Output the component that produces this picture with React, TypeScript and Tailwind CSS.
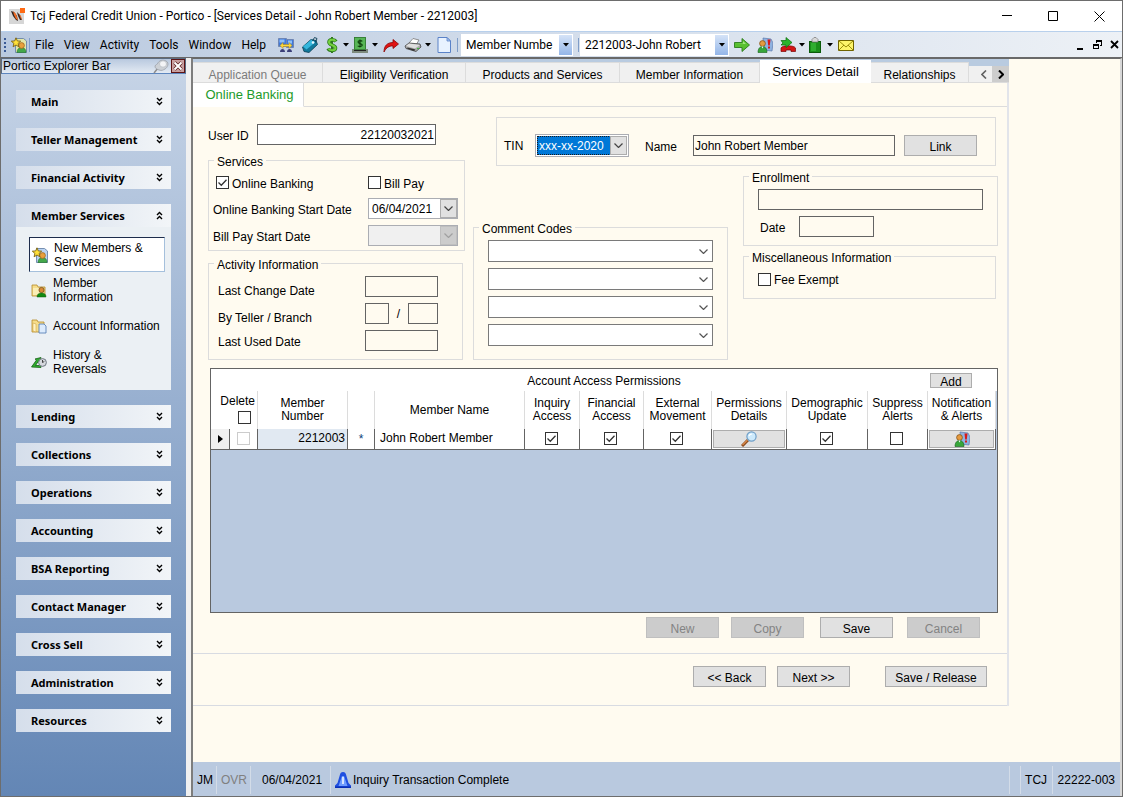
import { useState } from "react";
import type { ReactNode } from "react";

const sections = [
  "Main",
  "Teller Management",
  "Financial Activity",
  "Member Services",
  "Lending",
  "Collections",
  "Operations",
  "Accounting",
  "BSA Reporting",
  "Contact Manager",
  "Cross Sell",
  "Administration",
  "Resources",
];

const tabs = [
  { label: "Application Queue", width: "w-[130px]" },
  { label: "Eligibility Verification", width: "w-[143px]" },
  { label: "Products and Services", width: "w-[154px]" },
  { label: "Member Information", width: "w-[140px]" },
  { label: "Services Detail", width: "w-[111px]" },
  { label: "Relationships", width: "w-[98px]" },
];

/* ---------- icons ---------- */

function Icon({ children, size = "size-4" }: { children: ReactNode; size?: string }) {
  return (
    <svg viewBox="0 0 16 16" className={`${size} shrink-0`} aria-hidden="true">
      {children}
    </svg>
  );
}

function AppLogo() {
  return (
    <Icon>
      <rect x="0" y="1" width="15" height="15" fill="#d6d6d6" />
      <path d="M2 3l3 1 3 4 1 5-2-1-3-4z" fill="#2e2422" />
      <path d="M4 3l3 3 2 6-2-1-2-4z" fill="#f26a21" />
      <path d="M8 4l3 3 2 5-2 0-2-4z" fill="#3a2a26" />
      <path d="M10 6l2 2 1 4-1-1z" fill="#f26a21" />
      <rect x="11" y="0" width="5" height="5" fill="#ff6a13" />
    </Icon>
  );
}

function StarMember({ page = "#b9d3f2" }: { page?: string }) {
  return (
    <Icon>
      <path d="M4.500 1.500h8L15.500 4v11.500h-11z" fill={page} stroke="#6a84a8" strokeWidth=".9" />
      <path d="M6 15.500C6 12 8 10.500 10.500 10.500s4.500 1.500 4.500 5z" fill="#43a84a" stroke="#1d6b22" strokeWidth=".5" />
      <circle cx="10.500" cy="8.500" r="2.900" fill="#e8a03c" stroke="#9a6218" strokeWidth=".7" />
      <path d="M5 .8l1.300 3.100 3.400.3-2.600 2.200.8 3.400L5 8 2.100 9.800l.8-3.400L.3 4.200l3.400-.3z" fill="#ffe03a" stroke="#7d6210" strokeWidth=".9" />
    </Icon>
  );
}

function FolderMember() {
  return (
    <Icon>
      <path d="M1 3h5l1 2h7v9H1z" fill="#f6dd8a" stroke="#b58a2a" strokeWidth=".8" />
      <path d="M2 6h8v7H2z" fill="#fbeeb5" />
      <circle cx="10.500" cy="8" r="2.600" fill="#d98a35" stroke="#5d3a10" strokeWidth=".6" />
      <path d="M6 15c0-3 2-4 4.500-4s4.500 1 4.500 4z" fill="#118a11" stroke="#0b5a0b" strokeWidth=".5" />
    </Icon>
  );
}

function FolderDoc() {
  return (
    <Icon>
      <path d="M1 2h5l1 2h6v10H1z" fill="#f6dd8a" stroke="#b58a2a" strokeWidth=".8" />
      <path d="M2 5l3 1v8l-3-1z" fill="#fff3c4" stroke="#c79a3a" strokeWidth=".5" />
      <path d="M8 6h5l2 2v7H8z" fill="#dcebfc" stroke="#5a82b8" strokeWidth=".9" />
    </Icon>
  );
}

function HistoryIcon() {
  return (
    <Icon>
      <path d="M.5 13l5-7L4 5l6-1.500L9 8 7.500 7 4.500 11.500H10v2z" fill="#2fae2f" stroke="#145f14" strokeWidth=".8" />
      <circle cx="11.500" cy="8.500" r="3.900" fill="#d5d9de" stroke="#6d7680" strokeWidth="1" />
      <path d="M11.500 6v2.500l1.800-1" stroke="#333" strokeWidth=".9" fill="none" />
    </Icon>
  );
}

function MonitorsIcon() {
  return (
    <Icon>
      <path d="M.5 1.500h8v8h-8zM8.500 2.500h7v8h-7z" fill="#3f78dc" stroke="#6f86b4" strokeWidth="1" />
      <path d="M1.500 2.500h5v3h-5zM10 3.500h4v3h-4z" fill="#8fc0f5" />
      <path d="M2 15c0-4 5-4 5 0zM9 15c0-4 5-4 5 0z" fill="#3b3f78" />
      <path d="M2 8.500l3-3v2h6v-2l3 3-3 3v-2H5v2z" fill="#ffd83a" stroke="#a88412" strokeWidth=".5" />
    </Icon>
  );
}

function TagIcon() {
  return (
    <Icon>
      <path d="M.5 10L9 2.500l5 1 1.500 4L7 15.500l-5-1z" fill="#12799c" stroke="#0a3c52" strokeWidth=".8" />
      <path d="M1 9.500L9.500 2.500l3.500 3-8.500 7z" fill="#35b6dc" />
      <circle cx="11" cy="5.500" r="1.300" fill="#e9f8ff" />
      <path d="M10.500 4l2-3.500 2.500 1-1.500 4" stroke="#0a3c52" strokeWidth=".9" fill="none" />
    </Icon>
  );
}

function DollarIcon() {
  return (
    <Icon>
      <path d="M12 4.500C10.500 2 5 2 5 5.200S11.500 8 11.500 11s-6 3.300-7.500.5" fill="none" stroke="#2f7a1c" strokeWidth="3.600" />
      <path d="M8 0v16" stroke="#2f7a1c" strokeWidth="2" />
      <path d="M11.500 4.500C10.500 2 5 2 5 5.200S11.500 8 11.500 11s-6 3-7 .5" fill="none" stroke="#74d23f" strokeWidth="2" />
    </Icon>
  );
}

function CashIcon() {
  return (
    <Icon>
      <rect x="2.500" y=".5" width="11" height="12" fill="#57b657" stroke="#2f7a2f" strokeWidth=".9" />
      <path d="M10.300 4.300C9.300 3.200 6 3.400 6 5.100s4.300 1.300 4.300 3-3.300 1.900-4.600.8M8 2.500v8" fill="none" stroke="#0b3c0b" strokeWidth="1.100" />
      <path d="M0 12h2v1h12v-1h2v4H0z" fill="#7d8a7d" />
      <path d="M2 13h12v1H2z" fill="#222" />
    </Icon>
  );
}

function RedArrow() {
  return (
    <Icon>
      <path d="M1 15c0-6 3-9.500 9-9.500V2.500L15.500 7 10 11.500V9C6 8.500 3 11 1 15z" fill="#e01414" stroke="#8a0505" strokeWidth=".8" />
    </Icon>
  );
}

function PrinterIcon() {
  return (
    <svg viewBox="0 0 18 16" className="h-4 w-[18px] shrink-0" aria-hidden="true">
      <path d="M5 6l4-4.500 6 1.500-3 5z" fill="#fff" stroke="#777" strokeWidth=".8" />
      <path d="M1 9l4-3 11 1 1 3-5 4.500-10-3z" fill="#a9a9a9" stroke="#444" strokeWidth=".8" />
      <path d="M2 9l9 2.500L16 8 5 6.500z" fill="#dedede" />
      <path d="M3 11.500l7 2.500 1.500-1.500-8-2z" fill="#333" />
      <path d="M13 11h2v1h-2z" fill="#3fbf3f" />
    </svg>
  );
}

function PageIcon() {
  return (
    <Icon>
      <path d="M2 .5h9l3.500 3.500v11.500H2z" fill="#e8f2ff" stroke="#5a82c8" strokeWidth="1" />
      <path d="M11 .5V4h3.500z" fill="#a9c8f0" stroke="#5a82c8" strokeWidth=".8" />
    </Icon>
  );
}

function GreenArrow() {
  return (
    <Icon>
      <path d="M.5 5.500H8V1.500l7.500 6.500L8 14.500v-4H.5z" fill="#58c030" stroke="#2b7a1c" strokeWidth=".9" />
      <path d="M1.500 6.500H9V4l3 3z" fill="#a5e685" />
    </Icon>
  );
}

function MemberAlert() {
  return (
    <Icon>
      <path d="M6 1l8 1 2 4-1 8-8-1z" fill="#8fb2e0" stroke="#5a7aae" strokeWidth=".7" />
      <path d="M10.500 2.500h3l-.7 6h-1.600zM11 9.500h2v2h-2z" fill="#d81818" />
      <circle cx="5.500" cy="6.500" r="2.900" fill="#e59a3f" stroke="#7a4a12" strokeWidth=".7" />
      <path d="M1 15.500C1 11.500 3 9.500 5.500 9.500s4.500 2 4.500 6z" fill="#37a63a" stroke="#14611a" strokeWidth=".6" />
      <path d="M4.500 9.500l1 2 1-2z" fill="#fff" />
    </Icon>
  );
}

function PhoneArrow() {
  return (
    <Icon>
      <path d="M1 11c1-3 13-3 14.500 0v3.500H11V13H6v1.500H1z" fill="#d31616" stroke="#7a0707" strokeWidth=".7" />
      <path d="M1 3.500h5V.5L12 5.500l-6 5V8H1l2-2z" fill="#2cb52c" stroke="#0c6a0c" strokeWidth=".7" />
    </Icon>
  );
}

function ClipIcon() {
  return (
    <Icon>
      <rect x="2.500" y="4.500" width="11" height="11" fill="#1b8f1b" stroke="#0a5a0a" />
      <path d="M4 6h5v8H4z" fill="#2fae2f" />
      <path d="M5 5V2.500L7 .5h2l2 2V5z" fill="#d8d8d8" stroke="#777" strokeWidth=".7" />
    </Icon>
  );
}

function MailIcon() {
  return (
    <Icon>
      <path d="M.5 3.500h15v10H.5z" fill="#fdf56a" stroke="#6f6300" />
      <path d="M1 4l7 6 7-6M1 13l5-5M15 13l-5-5" fill="none" stroke="#8f8200" strokeWidth=".9" />
    </Icon>
  );
}

function PinIcon() {
  return (
    <Icon>
      <path d="M1 15l4-5" stroke="#8d8d8d" strokeWidth="1.500" />
      <path d="M2 8c1-2 2-1 3-3s4-4 8-2 1 7-1 8-3 2-6 1-4-2-4-4z" fill="#cdd1d6" stroke="#9aa0a8" strokeWidth=".8" />
      <ellipse cx="10" cy="6" rx="3.500" ry="3.200" fill="#f3f4f6" stroke="#b5bac0" strokeWidth=".7" />
    </Icon>
  );
}

function MagnifierIcon() {
  return (
    <Icon>
      <path d="M1 15l6-6" stroke="#8a4a1c" strokeWidth="3" />
      <path d="M1.500 14l5-5" stroke="#d88a4a" strokeWidth="1.200" />
      <circle cx="10.500" cy="5.500" r="4.600" fill="#cdeafc" stroke="#6f9fc8" strokeWidth="1.200" />
      <path d="M8 5c.5-1.500 1.500-2 3-2" stroke="#fff" strokeWidth="1.200" fill="none" />
    </Icon>
  );
}

function StatusBell() {
  return (
    <Icon>
      <path d="M8 0c2 0 2.500 1 3 2.500L13.500 11l2.500 2.500V16H0v-2.500L2.500 11 5 2.500C5.500 1 6 0 8 0z" fill="#1f4fe0" />
      <path d="M7 4h2l3.500 10h-9z" fill="#6f9cff" />
      <path d="M7.200 5h1.600v7H7.200z" fill="#f2f6ff" />
      <path d="M0 14.500h16V16H0z" fill="#0a2fb8" />
    </Icon>
  );
}

function Caret({ className = "" }: { className?: string }) {
  return (
    <svg viewBox="0 0 7 4" className={`h-1 w-[7px] shrink-0 ${className}`} aria-hidden="true">
      <path d="M1 0h6L4 3.500z" fill="#000" />
    </svg>
  );
}

function Chevron({ className }: { className: string }) {
  return (
    <svg viewBox="0 0 9 5" className="h-[5px] w-[9px]" aria-hidden="true">
      <path d="M.5.5l4 4 4-4" fill="none" strokeWidth="1.200" className={className} />
    </svg>
  );
}

function DoubleChevron({ up }: { up?: boolean }) {
  return (
    <svg viewBox="0 0 7 9" className="h-[9px] w-[7px]" aria-hidden="true">
      <path
        d={up ? "M1 4l2.500-2.500L6 4M1 8l2.500-2.500L6 8" : "M1 1l2.500 2.500L6 1M1 5l2.500 2.500L6 5"}
        fill="none"
        stroke="#000"
        strokeWidth="1.400"
      />
    </svg>
  );
}

/* ---------- form controls ---------- */

function Group({ title, className = "", children }: { title: string; className?: string; children: ReactNode }) {
  return (
    <fieldset className={`border border-[#dcdcdc] ${className}`}>
      <legend className="ml-[5px] px-[3px] pt-1 leading-[14px]">{title}</legend>
      {children}
    </fieldset>
  );
}

function Check({ label, name, defaultChecked, disabled }: { label?: string; name: string; defaultChecked?: boolean; disabled?: boolean }) {
  return (
    <label className="inline-flex items-center gap-[3px]">
      <span className="relative flex size-[13px]">
        <input
          type="checkbox"
          name={name}
          aria-label={label ? undefined : name}
          defaultChecked={defaultChecked}
          disabled={disabled}
          className="peer size-[13px] appearance-none border border-[#333333] bg-white disabled:border-[#cccccc]"
        />
        <svg viewBox="0 0 13 13" className="pointer-events-none absolute inset-0 hidden size-[13px] peer-checked:block" aria-hidden="true">
          <path d="M2.500 6.500l2.800 2.800 5.200-5.500" fill="none" stroke="#333" strokeWidth="1.300" />
        </svg>
      </span>
      {label && <span className="pt-[2px] leading-[14px]">{label}</span>}
    </label>
  );
}

function TextBox({ id, label, value = "", className }: { id: string; label?: string; value?: string; className: string }) {
  return (
    <input
      id={id}
      type="text"
      aria-label={label}
      defaultValue={value}
      className={`h-[21px] border border-[#646464] px-px outline-none ${className}`}
    />
  );
}

function Button({ children, disabled, className = "w-[73px]" }: { children: ReactNode; disabled?: boolean; className?: string }) {
  return (
    <button
      type="button"
      disabled={disabled}
      className={`h-[21px] border border-[#adadad] bg-[#e1e1e1] pt-[3px] leading-[14px] disabled:border-[#bfbfbf] disabled:bg-[#cccccc] disabled:text-[#838383] ${className}`}
    >
      {children}
    </button>
  );
}

function DateCombo({ id, value, disabled }: { id: string; value?: string; disabled?: boolean }) {
  return (
    <div className={`relative flex h-[21px] w-[90px] border border-[#abadb3] ${disabled ? "bg-[#f0f0f0]" : "bg-white"}`}>
      <select id={id} disabled={disabled} className="w-full appearance-none pt-px pl-[3px] outline-none">
        <option>{value ?? ""}</option>
      </select>
      <span
        className={`pointer-events-none absolute inset-y-0 right-0 flex w-[17px] items-center justify-center border ${
          disabled ? "border-[#bfbfbf] bg-[#cccccc]" : "border-[#adadad] bg-[#e1e1e1]"
        }`}
      >
        <Chevron className={disabled ? "stroke-[#a0a0a0]" : "stroke-[#444444]"} />
      </span>
    </div>
  );
}

function ToolbarCombo({ label, value, width }: { label: string; value: string; width: string }) {
  return (
    <div className={`relative flex h-[22px] bg-white ${width}`}>
      <select aria-label={label} className="w-full appearance-none pr-4 pl-[5px] outline-none">
        <option>{value}</option>
      </select>
      <span className="pointer-events-none absolute inset-y-px right-px flex w-[13px] items-center justify-center bg-linear-to-b from-[#d5e3f7] to-[#94b6e8]">
        <Caret />
      </span>
    </div>
  );
}

/* ---------- window parts ---------- */

function TitleBar() {
  return (
    <header className="flex h-[30px] items-center bg-white pl-2 font-['Roboto',sans-serif] text-xs">
      <AppLogo />
      <h1 className="ml-[5px] flex-1 whitespace-nowrap">
        Tcj Federal Credit Union - Portico - [Services Detail - John Robert Member - 2212003]
      </h1>
      <button type="button" aria-label="Minimize" className="flex w-[46px] justify-center">
        <svg viewBox="0 0 11 11" className="size-[11px]"><path d="M0 4.500h10" stroke="#000" /></svg>
      </button>
      <button type="button" aria-label="Maximize" className="flex w-[46px] justify-center">
        <svg viewBox="0 0 11 11" className="size-[11px]"><path d="M.5.5h9v9h-9z" fill="none" stroke="#000" /></svg>
      </button>
      <button type="button" aria-label="Close" className="flex w-[46px] justify-center">
        <svg viewBox="0 0 11 11" className="size-[11px]"><path d="M.5.5l10 10M10.500.5l-10 10" stroke="#000" /></svg>
      </button>
    </header>
  );
}

function ToolSeparator() {
  return <span className="h-[14px] w-px bg-[#7f9dc8]" />;
}

function MenuBar() {
  return (
    <nav className="flex h-[26px] items-center border-t border-[#b8d0ec] bg-linear-to-r from-[#b9c9df] to-[#edf1f6] font-['Roboto',sans-serif] text-xs whitespace-nowrap">
      <span className="ml-[3px] h-[14px] border-l-2 border-dotted border-[#3a5a96]" />
      <span className="ml-[5px] flex"><StarMember page="#e3e7a8" /></span>
      <span className="ml-[2px] h-[14px] w-px bg-[#7f9dc8]" />
      <div className="ml-[5px] flex w-[243px] justify-between pr-[12px]">
        {["File", "View", "Activity", "Tools", "Window", "Help"].map((item) => (
          <button key={item} type="button">{item}</button>
        ))}
      </div>
      <button type="button" aria-label="Terminals"><MonitorsIcon /></button>
      <button type="button" aria-label="Tags" className="ml-2"><TagIcon /></button>
      <button type="button" aria-label="Money" className="ml-[6px]"><DollarIcon /></button>
      <Caret className="ml-[2px]" />
      <button type="button" aria-label="Cash" className="ml-[3px]"><CashIcon /></button>
      <Caret className="ml-[3px]" />
      <button type="button" aria-label="Forward" className="ml-[5px]"><RedArrow /></button>
      <button type="button" aria-label="Print" className="ml-[5px]"><PrinterIcon /></button>
      <Caret className="ml-[2px]" />
      <button type="button" aria-label="New page" className="ml-[5px] mr-[5px]"><PageIcon /></button>
      <ToolSeparator />
      <div className="mr-[5px] ml-[3px]"><ToolbarCombo label="Search by" value="Member Numbe" width="w-[112px]" /></div>
      <ToolSeparator />
      <div className="mr-[5px] ml-px"><ToolbarCombo label="Member" value="2212003-John Robert" width="w-[149px]" /></div>
      <button type="button" aria-label="Go"><GreenArrow /></button>
      <button type="button" aria-label="Member alerts" className="ml-[7px]"><MemberAlert /></button>
      <button type="button" aria-label="Transfer call" className="ml-[7px]"><PhoneArrow /></button>
      <Caret className="ml-[2px]" />
      <button type="button" aria-label="Clipboard" className="ml-[2px]"><ClipIcon /></button>
      <Caret className="ml-[3px]" />
      <button type="button" aria-label="Mail" className="ml-[5px]"><MailIcon /></button>
      <span className="flex-1" />
      <div className="flex gap-[7px] pr-[2px]">
        <button type="button" aria-label="Minimize document">
          <svg viewBox="0 0 10 10" className="size-[10px]"><path d="M1 8h6v2H1z" /></svg>
        </button>
        <button type="button" aria-label="Restore document">
          <svg viewBox="0 0 10 10" className="size-[10px]">
            <path d="M3 0h6v6H7V5h1V2H4v1H3zM0 4h6v5H0zM1 6v2h4V6z" fillRule="evenodd" />
          </svg>
        </button>
        <button type="button" aria-label="Close document">
          <svg viewBox="0 0 10 10" className="size-[10px]"><path d="M1 1l7 7M8 1L1 8" stroke="#000" strokeWidth="1.800" /></svg>
        </button>
      </div>
    </nav>
  );
}

function MemberServicesLinks() {
  const links = [
    { label: "New Members & Services", icon: <StarMember />, wrap: "w-[100px]" },
    { label: "Member Information", icon: <FolderMember />, wrap: "w-[80px]" },
    { label: "Account Information", icon: <FolderDoc />, wrap: "" },
    { label: "History & Reversals", icon: <HistoryIcon />, wrap: "w-[70px]" },
  ];
  return (
    <ul className="bg-[#ebf0f4] pt-[10px] pr-[6px] pb-[10px] pl-[13px] leading-[14px]">
      {links.map((link, i) => (
        <li key={link.label}>
          <a
            href="#"
            className={`flex items-center gap-[6px] whitespace-nowrap ${
              i === 0
                ? "h-[35px] border border-t-[#1d2c4c] border-r-[#a5c0dc] border-b-[#a5c0dc] border-l-[#1d2c4c] bg-white pl-[2px]"
                : "h-[36px] pl-[2px]"
            }`}
          >
            {link.icon}
            <span className={link.wrap ? `whitespace-normal ${link.wrap}` : ""}>{link.label}</span>
          </a>
        </li>
      ))}
    </ul>
  );
}

function ExplorerBar() {
  return (
    <aside className="flex w-[185px] shrink-0 flex-col">
      <div className="flex h-4 items-center border border-[#5b6b80] border-b-[#5d86bf] bg-linear-to-b from-[#b9c9df] to-[#e3eaf3] pl-px">
        <h2 className="flex-1">Portico Explorer Bar</h2>
        <button type="button" aria-label="Pin"><PinIcon /></button>
        <button type="button" aria-label="Close explorer bar" className="ml-[2px] flex size-[14px] items-center justify-center border border-[#5d1414] bg-[#c9a0a0]">
          <svg viewBox="0 0 10 10" className="size-[10px]">
            <path d="M1.500 1.500l7 7M8.500 1.500l-7 7" stroke="#5a2020" strokeWidth="3.400" />
            <path d="M1.500 1.500l7 7M8.500 1.500l-7 7" stroke="#fff" strokeWidth="2" />
          </svg>
        </button>
      </div>
      <div className="flex flex-1 flex-col gap-[15px] bg-linear-to-b from-[#c5d3e6] to-[#6386b5] px-[15px] pt-4">
        {sections.map((name) => {
          const open = name === "Member Services";
          return (
            <section key={name}>
              <button
                type="button"
                aria-expanded={open}
                className="flex h-[23px] w-full items-center justify-between bg-linear-to-r from-[#d5deeb] to-[#f2f5f8] pr-2 pl-[15px] font-['Noto_Sans',sans-serif] text-[11px] font-bold"
              >
                <span className="pt-[2px]">{name}</span>
                <DoubleChevron up={open} />
              </button>
              {open && <MemberServicesLinks />}
            </section>
          );
        })}
      </div>
    </aside>
  );
}

function TabStrip() {
  const [active, setActive] = useState("Services Detail");
  return (
    <div role="tablist" className="flex h-6 items-end bg-[#b9cbe0]">
      {tabs.map((tab, i) => (
        <button
          key={tab.label}
          type="button"
          role="tab"
          aria-selected={tab.label === active}
          onClick={() => setActive(tab.label)}
          className={
            tab.label === active
              ? `h-[23px] bg-white text-[13px] ${tab.width}`
              : `h-[21px] border-t border-r border-b border-[#dcdcdc] bg-[#f0f0f0] pt-1 ${tab.width} ${i === 0 ? "text-[#7b7b7b]" : ""}`
          }
        >
          {tab.label}
        </button>
      ))}
      <div className="flex h-[17px] flex-1 justify-end border-b border-[#dcdcdc] bg-[#f0f0f0]">
        <button type="button" aria-label="Scroll tabs left" className="flex w-[17px] items-center justify-center">
          <svg viewBox="0 0 6 9" className="h-[9px] w-[6px]"><path d="M5 .5l-4 4 4 4" fill="none" stroke="#606060" strokeWidth="1.600" /></svg>
        </button>
        <button type="button" aria-label="Scroll tabs right" className="flex w-[17px] items-center justify-center bg-[#cdcdcd]">
          <svg viewBox="0 0 6 9" className="h-[9px] w-[6px]"><path d="M1 .5l4 4-4 4" fill="none" stroke="#000" strokeWidth="2" /></svg>
        </button>
      </div>
    </div>
  );
}

function ServicesGroup() {
  return (
    <Group title="Services" className="mt-[6px] pb-px">
      <div className="flex h-[26px] items-center pt-px pl-[7px]">
        <div className="flex w-[152px]"><Check name="online" label="Online Banking" defaultChecked /></div>
        <Check name="billpay" label="Bill Pay" />
      </div>
      <div className="flex h-[27px] items-center justify-between pr-[6px] pl-1">
        <label htmlFor="ob-start" className="pt-[2px]">Online Banking Start Date</label>
        <DateCombo id="ob-start" value="06/04/2021" />
      </div>
      <div className="flex h-[27px] items-center justify-between pr-[6px] pl-1">
        <label htmlFor="bp-start" className="pt-[2px]">Bill Pay Start Date</label>
        <DateCombo id="bp-start" disabled />
      </div>
    </Group>
  );
}

function ActivityGroup() {
  return (
    <Group title="Activity Information" className="mt-[3px] mr-[2px] pt-px pb-[5px]">
      <div className="grid auto-rows-[27px] grid-cols-[147px_1fr] items-center pl-[9px]">
        <label htmlFor="last-change" className="pt-2">Last Change Date</label>
        <TextBox id="last-change" className="w-[73px]" />
        <label htmlFor="teller" className="pt-2">By Teller / Branch</label>
        <div className="flex items-center">
          <TextBox id="teller" className="w-6" />
          <span className="w-[19px] text-center">/</span>
          <TextBox id="branch" label="Branch" className="w-[30px]" />
        </div>
        <label htmlFor="last-used" className="pt-[2px]">Last Used Date</label>
        <TextBox id="last-used" className="w-[73px]" />
      </div>
    </Group>
  );
}

function TinBox() {
  return (
    <div className="mr-[2px] ml-[23px] flex h-[49px] items-center border border-[#dcdcdc] pt-2 pl-[7px]">
      <label htmlFor="tin" className="w-[31px]">TIN</label>
      <div className="relative flex h-[23px] w-[94px] border border-[#abadb3] bg-white p-px">
        <select id="tin" className="w-[74px] appearance-none border border-dotted border-[#1a1a1a] bg-[#0078d7] pl-px text-white outline-none">
          <option>xxx-xx-2020</option>
        </select>
        <span className="pointer-events-none absolute inset-y-px right-px flex w-[17px] items-center justify-center border border-[#adadad] bg-[#e1e1e1]">
          <Chevron className="stroke-[#444444]" />
        </span>
      </div>
      <label htmlFor="name" className="ml-4 w-12 pt-[2px]">Name</label>
      <TextBox id="name" value="John Robert Member" className="w-[202px]" />
      <span className="ml-[9px] flex"><Button>Link</Button></span>
    </div>
  );
}

function CommentCodes() {
  return (
    <Group title="Comment Codes" className="mt-[52px] w-[255px]">
      <div className="flex flex-col gap-[6px] px-[14px] pt-1 pb-[13px]">
        {[1, 2, 3, 4].map((n) => (
          <div key={n} className="relative flex h-[22px] border border-[#7a7a7a] bg-white">
            <select aria-label={`Comment code ${n}`} className="w-full appearance-none px-1 outline-none">
              <option></option>
            </select>
            <span className="pointer-events-none absolute inset-y-0 right-1 flex items-center">
              <Chevron className="stroke-[#555555]" />
            </span>
          </div>
        ))}
      </div>
    </Group>
  );
}

function SideGroups() {
  return (
    <div className="w-[255px] pt-px">
      <Group title="Enrollment">
        <div className="flex flex-col gap-[6px] px-[14px] pt-1 pb-2">
          <TextBox id="enrollment" label="Enrollment" className="w-full" />
          <div className="flex items-center pl-[2px]">
            <label htmlFor="enroll-date" className="w-[39px] pt-[2px]">Date</label>
            <TextBox id="enroll-date" className="w-[75px]" />
          </div>
        </div>
      </Group>
      <Group title="Miscellaneous Information" className="mt-px mr-[2px]">
        <div className="flex px-[14px] pt-[6px] pb-[11px]">
          <Check name="fee" label="Fee Exempt" />
        </div>
      </Group>
    </div>
  );
}

function Th({ children }: { children?: ReactNode }) {
  return <th className="h-[38px] border-r border-[#dcdcdc] font-normal">{children}</th>;
}

function Td({ children, className = "pr-px text-center" }: { children?: ReactNode; className?: string }) {
  return <td className={`h-[21px] border-r border-b border-[#646464] ${className}`}>{children}</td>;
}

function CheckCell({ name, checked }: { name: string; checked?: boolean }) {
  return (
    <Td className="pr-[2px] pb-[2px]">
      <span className="flex justify-center"><Check name={name} defaultChecked={checked} /></span>
    </Td>
  );
}

function PermissionsTable() {
  return (
    <div className="mt-2 ml-[2px] h-[245px] border border-[#646464] bg-[#b9c9df]">
      <div className="relative flex h-[22px] items-center justify-center bg-white pt-[2px]">
        <h3>Account Access Permissions</h3>
        <button type="button" className="absolute top-1 right-[25px] h-[15px] w-[42px] border border-[#adadad] bg-[#e1e1e1] pt-px leading-[14px]">
          Add
        </button>
      </div>
      <div className="pr-px">
        <table className="w-full table-fixed border-separate border-spacing-0 bg-white leading-[13px]">
          <colgroup>
            <col className="w-[19px]" />
            <col className="w-7" />
            <col className="w-[90px]" />
            <col className="w-[27px]" />
            <col />
            <col className="w-[55px]" />
            <col className="w-[64px]" />
            <col className="w-[68px]" />
            <col className="w-[75px]" />
            <col className="w-[81px]" />
            <col className="w-[60px]" />
            <col className="w-[68px]" />
          </colgroup>
          <thead>
            <tr>
              <th colSpan={2} className="h-[38px] border-r border-[#dcdcdc] font-normal">
                <span className="flex flex-col items-end gap-[3px] pr-[2px] pb-[2px] leading-[14px]">
                  Delete
                  <span className="flex pr-1"><Check name="delete all" /></span>
                </span>
              </th>
              <Th>Member<br />Number</Th>
              <Th />
              <Th>Member Name</Th>
              <Th>Inquiry<br />Access</Th>
              <Th>Financial<br />Access</Th>
              <Th>External<br />Movement</Th>
              <Th>Permissions<br />Details</Th>
              <Th>Demographic<br />Update</Th>
              <Th>Suppress<br />Alerts</Th>
              <Th>Notification<br />&amp; Alerts</Th>
            </tr>
          </thead>
          <tbody>
            <tr>
              <Td className="bg-[#f0f0f0]">
                <svg viewBox="0 0 5 8" className="ml-[7px] h-2 w-[5px]"><path d="M0 0l5 4-5 4z" /></svg>
              </Td>
              <Td className="pb-[2px]"><span className="flex justify-center"><Check name="delete row" disabled /></span></Td>
              <Td className="bg-[#e1e9f2] pr-[2px] pb-px text-right">2212003</Td>
              <Td className="text-center text-[#0b3c7a]">*</Td>
              <Td className="pb-px pl-[5px]">John Robert Member</Td>
              <CheckCell name="inquiry access" checked />
              <CheckCell name="financial access" checked />
              <CheckCell name="external movement" checked />
              <Td className="p-px">
                <button type="button" aria-label="Permissions details" className="flex h-[18px] w-full items-center justify-center border border-[#adadad] bg-[#e1e1e1]">
                  <MagnifierIcon />
                </button>
              </Td>
              <CheckCell name="demographic update" checked />
              <CheckCell name="suppress alerts" />
              <Td className="p-px">
                <button type="button" aria-label="Notification and alerts" className="flex h-[18px] w-full items-center justify-center border border-[#adadad] bg-[#e1e1e1]">
                  <MemberAlert />
                </button>
              </Td>
            </tr>
          </tbody>
        </table>
      </div>
    </div>
  );
}

function ServicesDetail() {
  return (
    <div className="border-r-2 border-[#e2e4ea]">
      <div className="flex h-6">
        <button type="button" className="w-[111px] border-r border-b border-[#dcdcdc] border-b-white bg-white pl-[3px] text-[13px] text-[#1d9a2b]">
          Online Banking
        </button>
        <div className="flex-1 border-b border-[#dcdcdc]" />
      </div>
      <div className="border-b border-[#d8dbe2] pr-[9px] pb-[15px] pl-[15px]">
        <div className="flex gap-2 pt-[10px]">
          <div className="w-[257px] shrink-0 pt-[7px]">
            <div className="flex items-center">
              <label htmlFor="user-id" className="w-[49px] pt-[2px] whitespace-nowrap">User ID</label>
              <TextBox id="user-id" value="22120032021" className="w-[179px] bg-white text-right" />
            </div>
            <ServicesGroup />
            <ActivityGroup />
          </div>
          <div className="flex-1">
            <TinBox />
            <div className="flex items-start justify-between">
              <CommentCodes />
              <SideGroups />
            </div>
          </div>
        </div>
        <PermissionsTable />
        <div className="mt-1 flex justify-end pr-[18px]">
          <Button disabled>New</Button>
          <span className="ml-3 flex"><Button disabled>Copy</Button></span>
          <span className="ml-4 flex"><Button>Save</Button></span>
          <span className="ml-[14px] flex"><Button disabled>Cancel</Button></span>
        </div>
      </div>
      <div className="flex justify-end border-b border-[#d8dbe2] pt-3 pr-5 pb-[18px]">
        <Button>&lt;&lt; Back</Button>
        <span className="ml-[11px] flex"><Button>Next &gt;&gt;</Button></span>
        <span className="ml-[35px] flex"><Button className="w-[102px]">Save / Release</Button></span>
      </div>
    </div>
  );
}

function StatusBar() {
  return (
    <footer className="flex h-[34px] items-center bg-[#b9c9df] pt-[2px]">
      <span className="h-7 w-6 border-r border-[#d3dce8] pl-1 leading-7">JM</span>
      <span className="h-7 w-[34px] border-r border-[#d3dce8] pl-1 leading-7 text-[#808080]">OVR</span>
      <span className="h-7 w-20 border-r border-[#d3dce8] pl-[11px] leading-7">06/04/2021</span>
      <span className="ml-1 flex items-center gap-[2px]">
        <StatusBell />
        Inquiry Transaction Complete
      </span>
      <span className="h-7 flex-1 border-r border-[#d3dce8]" />
      <span className="h-7 w-[11px] border-r border-[#d3dce8]" />
      <span className="h-7 w-8 border-r border-[#d3dce8] text-center leading-7">TCJ</span>
      <span className="h-7 pr-[5px] pl-[5px] leading-7">22222-003</span>
    </footer>
  );
}

export default function App() {
  return (
    <div className="flex min-h-screen flex-col border border-[#6d6d6d] bg-[#f0f0f0] font-['Liberation_Sans',Arial,sans-serif] text-xs text-black">
      <TitleBar />
      <MenuBar />
      <div className="flex flex-1 border-t border-[#696969]">
        <ExplorerBar />
        <div className="ml-[5px] flex flex-1 flex-col border-t border-r-2 border-l-2 border-t-[#696969] border-r-[#d8d8d8] border-l-[#7d7d7d]">
          <main className="flex-1 bg-[#fffbf0]">
            <div className="w-full max-w-[816px]">
              <TabStrip />
              <ServicesDetail />
            </div>
          </main>
          <StatusBar />
        </div>
      </div>
    </div>
  );
}
